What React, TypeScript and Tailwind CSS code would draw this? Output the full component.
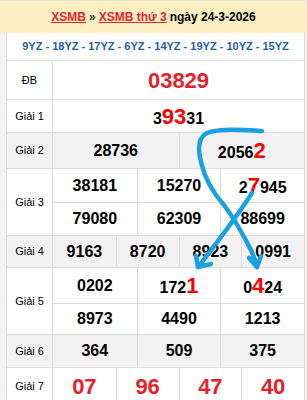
import type { ReactNode } from "react";

type Row = {
  label: string;
  grey?: boolean;
  lines: { cols: number; h: string; cells: ReactNode[] }[];
};

const big = "text-[22px] font-bold text-[#ff0000]";

// number with one highlighted run of digits in the middle
function hl(pre: string, mark: string, post: string) {
  return (
    <span>
      {pre}
      <span className={big}>{mark}</span>
      {post}
    </span>
  );
}

const red = (n: string) => <span className="text-[22px] font-bold text-[#e8202a]">{n}</span>;

const rows: Row[] = [
  { label: "ĐB", lines: [{ cols: 1, h: "h-[38px]", cells: [red("03829")] }] },
  { label: "Giải 1", lines: [{ cols: 1, h: "h-[32px]", cells: [hl("3", "93", "31")] }] },
  { label: "Giải 2", grey: true, lines: [{ cols: 2, h: "h-[35px]", cells: ["28736", hl("2056", "2", "")] }] },
  {
    label: "Giải 3",
    lines: [
      { cols: 3, h: "h-[33px]", cells: ["38181", "15270", hl("2", "7", "945")] },
      { cols: 3, h: "h-[33px]", cells: ["79080", "62309", "88699"] },
    ],
  },
  { label: "Giải 4", grey: true, lines: [{ cols: 4, h: "h-[31px]", cells: ["9163", "8720", "8923", "0991"] }] },
  {
    label: "Giải 5",
    lines: [
      { cols: 3, h: "h-[35px]", cells: ["0202", hl("172", "1", ""), hl("0", "4", "24")] },
      { cols: 3, h: "h-[31px]", cells: ["8973", "4490", "1213"] },
    ],
  },
  { label: "Giải 6", grey: true, lines: [{ cols: 3, h: "h-[32px]", cells: ["364", "509", "375"] }] },
  { label: "Giải 7", lines: [{ cols: 4, h: "h-[36px]", cells: [red("07"), red("96"), red("47"), red("40")] }] },
];

const gridCols: Record<number, string> = {
  1: "grid-cols-1",
  2: "grid-cols-2",
  3: "grid-cols-3",
  4: "grid-cols-4",
};

export default function App() {
  return (
    <div className="relative w-[307px] h-[400px] overflow-hidden bg-[#f3f3f3] font-['Liberation_Sans',Arial,sans-serif] text-black">
      {/* Title */}
      <div className="h-[33px] border-t border-[#e2e2e2] bg-[#fcf0c2] flex items-center justify-center text-[12px] font-bold">
        <a className="text-[#e3262c] underline">XSMB</a>
        <span className="mx-[3px] text-[#333]">»</span>
        <a className="text-[#e3262c] underline">XSMB thứ 3</a>
        <span className="ml-[3px]">ngày 24-3-2026</span>
      </div>

      <div className="ml-[6px] w-[299px] border-x border-[#dcdcdc] bg-white">
        <div className="h-[27px] flex items-center justify-center text-[11px] font-bold text-[#1d5fa8]">
          9YZ - 18YZ - 17YZ - 6YZ - 14YZ - 19YZ - 10YZ - 15YZ
        </div>

        {rows.map((row) => (
          <div
            key={row.label}
            className={`flex border-t border-[#dcdcdc] ${row.grey ? "bg-[#f2f2f2]" : "bg-white"}`}
          >
            <div className="w-[45px] shrink-0 flex items-center justify-center text-[11px]">{row.label}</div>
            <div className="flex-1 border-l border-[#dcdcdc] flex flex-col">
              {row.lines.map((line, i) => (
                <div
                  key={i}
                  className={`grid ${gridCols[line.cols]} ${line.h} ${i > 0 ? "border-t border-[#dcdcdc]" : ""}`}
                >
                  {line.cells.map((c, j) => (
                    <div
                      key={j}
                      className={`flex items-center justify-center text-[16px] font-bold ${j > 0 ? "border-l border-[#dcdcdc]" : ""}`}
                    >
                      {c}
                    </div>
                  ))}
                </div>
              ))}
            </div>
          </div>
        ))}
        <div className="border-t border-[#dcdcdc]" />
      </div>
      <div className="h-[10px] bg-[#fdf6e0]" />

      {/* hand-drawn marks over the table */}
      <svg
        className="absolute inset-0 pointer-events-none"
        width="307"
        height="400"
        viewBox="0 0 307 400"
        fill="none"
        stroke="#1ba1e2"
        strokeWidth="4.5"
        strokeLinecap="round"
        strokeLinejoin="round"
      >
        <path d="M262 131 C245 130 220 128 207 133 C197 138 198 150 201 162 C205 180 215 195 224 205 C235 220 245 238 252 252 L257 267" />
        <path d="M249 258 L257 267 L261 256" />
        <path d="M252 193 C240 212 222 236 199 266" />
        <path d="M196 256 L198 267 L211 264" />
      </svg>
    </div>
  );
}
